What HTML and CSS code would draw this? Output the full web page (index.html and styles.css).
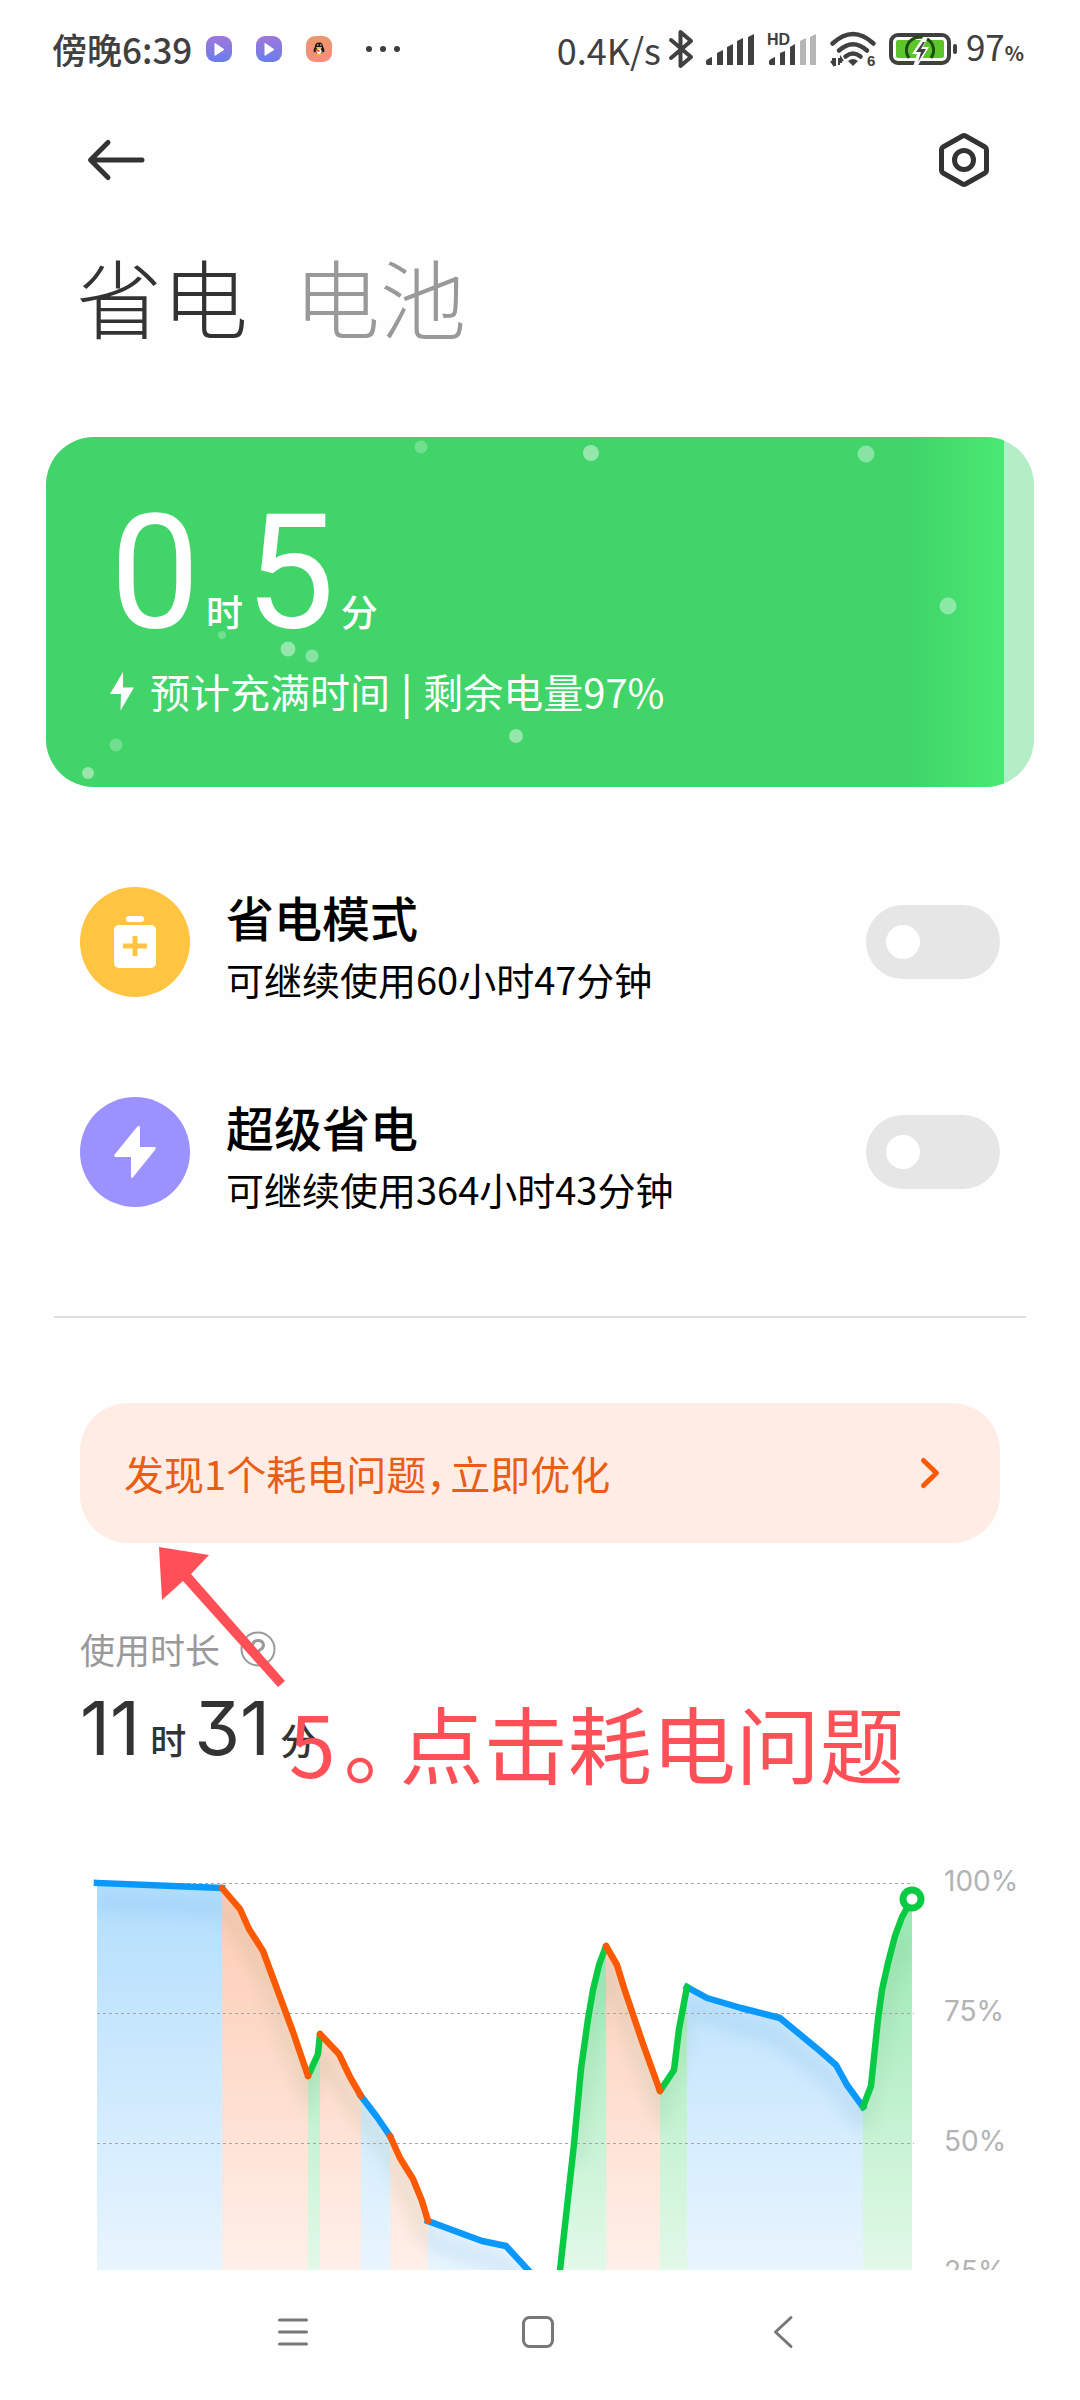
FILE: index.html
```html
<!DOCTYPE html>
<html lang="zh-CN">
<head>
<meta charset="utf-8">
<meta name="viewport" content="width=device-width">
<title>省电与电池</title>
<link rel="stylesheet" href="styles.css">
</head>
<body>
<div class="screen">
  <header class="status">
    <span class="status-time">傍晚6:39</span>
    <div class="status-apps">
      <svg width="26" height="26" viewBox="0 0 26 26" aria-hidden="true">
        <defs><linearGradient id="video" x1="0" y1="0" x2="0" y2="1"><stop offset="0" stop-color="#a077dc"/><stop offset="1" stop-color="#687ee8"/></linearGradient></defs>
        <rect width="26" height="26" rx="9" fill="url(#video)"/><path d="M8.500 7.500v11.500q0 1 1 .5l8-5.300q1-.8 0-1.500l-8-5.500q-1-.5-1 .3z" fill="#fff"/>
      </svg>
      <svg width="26" height="26" viewBox="0 0 26 26" aria-hidden="true">
        <rect width="26" height="26" rx="9" fill="url(#video)"/><path d="M8.500 7.500v11.500q0 1 1 .5l8-5.300q1-.8 0-1.500l-8-5.500q-1-.5-1 .3z" fill="#fff"/>
      </svg>
      <svg width="26" height="26" viewBox="0 0 26 26" aria-hidden="true">
        <defs><linearGradient id="penguin" x1="0" y1="0" x2="0" y2="1"><stop offset="0" stop-color="#e9996b"/><stop offset="1" stop-color="#fb8b80"/></linearGradient></defs>
        <rect width="26" height="26" rx="9" fill="url(#penguin)"/>
        <path d="M13 6.500c-3 0-4 2-4 4-1 2-2 4-1 6l1.500-1c.5 2 2 3.500 3.500 3.500s3-1.500 3.500-3.500l1.500 1c1-2 0-4-1-6 0-2-1-4-4-4z" fill="#201510"/>
        <ellipse cx="13" cy="15.500" rx="2.600" ry="2.800" fill="#fff"/><path d="M10 11h6l-1 2h-4z" fill="#e6c34a"/><path d="M9.500 13l4 1v2l-4-1z" fill="#ef4a2b"/><path d="M10 18.500h6" stroke="#f3b52e" stroke-width="1.500"/><path d="M11 9h1.500M14 9h1.500" stroke="#fff" stroke-width="1"/>
      </svg>
    </div>
    <svg class="status-more" width="34" height="6" viewBox="0 0 34 6" fill="#3c3c3c" aria-hidden="true"><circle cx="3" cy="3" r="3"/><circle cx="17" cy="3" r="3"/><circle cx="31" cy="3" r="3"/></svg>
    <span class="status-speed">0.4K/s</span>
    <div class="status-icons">
      <svg width="24" height="40" viewBox="0 0 24 40" fill="none" stroke="#404040" stroke-width="4" stroke-linecap="round" stroke-linejoin="round" aria-hidden="true"><path d="M2 11l20 17-10.500 9V3L22 12 2 29"/></svg>
      <svg width="48" height="32" viewBox="0 0 48 32" fill="#404040" aria-hidden="true"><path d="M0 31v-3q1-2 6-4v8H1zM11 32V20l6-3v15zM21 32V14l6-3v21zM31 32V8l6-3v27zM42 32V4l6-3v30q0 1-1 1z"/></svg>
      <svg width="50" height="34" viewBox="0 0 50 34" fill="#404040" aria-hidden="true"><text class="tiny" x="0" y="13" font-size="16">HD</text><path d="M2 32v-3q1-2 6-4v8H3zM13 33V21l5-2v14zM23 33V15l5-3v21z"/><path d="M33 33V9l6-3v27zM43 33V5l6-3v31z" fill="#b5b5b5"/></svg>
      <svg width="46" height="38" viewBox="0 0 46 38" aria-hidden="true"><g fill="none" stroke="#404040" stroke-width="4.500" stroke-linecap="round"><path d="M2.500 13.500q20.500-19 41 0M9 20.500q14-12.500 28 0M15.500 26.500q7.500-6 15 0"/></g><path d="M18 31q5-4 10 0l-5 5z" fill="#404040"/><path d="M3 28v6l-2-3M5 28v8M9 28v7M11 33v-5l2 3" fill="none" stroke="#404040" stroke-width="2"/><text class="tiny" x="37" y="36" font-size="15" fill="#404040">6</text></svg>
      <svg width="68" height="36" viewBox="0 0 68 36" aria-hidden="true"><rect x="2" y="4" width="58" height="28" rx="7" fill="#fff" stroke="#404040" stroke-width="4"/><rect x="7" y="9" width="48" height="18" rx="2" fill="#5cc52b"/><path d="M20 27c-5-7-3-20 11-21 14 1 16 14 11 21" fill="none" stroke="#1f4a12" stroke-width="3"/><path d="M34 6l-11 17h5l-4 13h4l12-20h-6l5-10z" fill="#fff"/><path d="M34 11l-7 10h5l-3 10 8-13h-5l4-7z" fill="#404040"/><rect x="64" y="13" width="4" height="10" rx="2" fill="#404040"/></svg>
    </div>
    <span class="status-level">97<small>%</small></span>
  </header>

  <main class="content">
    <div class="appbar">
      <button class="icon-button" aria-label="返回"><svg width="60" height="44" viewBox="0 0 60 44" fill="none" stroke="#333" stroke-width="5" stroke-linecap="round" stroke-linejoin="round"><path d="M56 22H5M22 4.500L4.500 22 22 39.500"/></svg></button>
      <button class="icon-button" aria-label="设置"><svg width="50" height="54" viewBox="0 0 50 54" fill="none" stroke="#333" stroke-width="5" stroke-linejoin="round"><path d="M23.500 3q1.500-.8 3 0l19.500 11q1.500 1 1.500 2.500v21q0 1.500-1.500 2.500l-19.500 11q-1.500.8-3 0L4 40q-1.500-1-1.500-2.500v-21Q2.500 15 4 14z"/><circle cx="25" cy="27" r="9.500"/></svg></button>
    </div>

    <nav class="tabs">
      <button class="tab tab-active">省电</button>
      <button class="tab">电池</button>
    </nav>

    <section class="charge">
      <div class="charge-fill" style="width: 97%"></div>
      <svg class="charge-bubbles" viewBox="0 0 988 350" fill="#fff" aria-hidden="true">
        <g opacity=".45"><circle cx="545" cy="16" r="8"/><circle cx="242" cy="212" r="7.500"/><circle cx="470" cy="299" r="7"/><circle cx="42" cy="336" r="6"/></g>
        <g opacity=".38"><circle cx="266" cy="219" r="6.500"/><circle cx="902" cy="169" r="8.500"/><circle cx="820" cy="17" r="8.500"/></g>
        <g opacity=".25"><circle cx="375" cy="10" r="6.500"/><circle cx="176" cy="198" r="4"/><circle cx="70" cy="308" r="6.500"/></g>
      </svg>
      <p class="charge-time">0<span>时</span>5<span>分</span></p>
      <p class="charge-note"><svg width="24" height="39" viewBox="0 0 24 39" fill="#fff" aria-hidden="true"><path d="M13 0L0 22h11l-.5 16.500L24 15.500H13z"/></svg><span>预计充满时间 <span class="bar">|</span> 剩余电量97%</span></p>
    </section>

    <section class="modes">
      <div class="mode">
        <span class="mode-icon mode-saver"><svg width="42" height="54" viewBox="0 0 42 54" aria-hidden="true"><rect x="12" y="1" width="18" height="6" rx="3" fill="#fff"/><rect y="10" width="42" height="43" rx="5" fill="#fff"/><path d="M21 21v20M9 31h24" stroke="#ffc542" stroke-width="5"/></svg></span>
        <label class="mode-text" for="saver"><span class="mode-title">省电模式</span><span class="mode-sub">可继续使用60小时47分钟</span></label>
        <input class="switch" type="checkbox" role="switch" id="saver">
      </div>
      <div class="mode">
        <span class="mode-icon mode-ultra"><svg width="42" height="54" viewBox="0 0 42 54" fill="#fff" aria-hidden="true"><path d="M23 2q3-3 3 1v19h14q3 0 1 3L20 51q-3 4-3 0V32H2q-3 0-1-3z"/></svg></span>
        <label class="mode-text" for="ultra"><span class="mode-title">超级省电</span><span class="mode-sub">可继续使用364小时43分钟</span></label>
        <input class="switch" type="checkbox" role="switch" id="ultra">
      </div>
    </section>

    <hr class="divider">

    <a class="issue" href="#optimize"><span>发现1个耗电问题<span class="half">，</span>立即优化</span><svg width="20" height="32" viewBox="0 0 20 32" fill="none" stroke="#fa5a05" stroke-width="5" stroke-linecap="round" stroke-linejoin="round" aria-hidden="true"><path d="M3.500 3.500L16.500 16 3.500 28.500"/></svg></a>

    <section class="usage">
      <h2 class="usage-label">使用时长<svg width="36" height="36" viewBox="0 0 36 36" fill="none" stroke="#999" aria-hidden="true"><circle cx="18" cy="18" r="16.500" stroke-width="2"/><path d="M12.500 14.500q.5-5 5.500-5t5.500 4.500q0 3-3 4.500-2.500 1.500-2.500 4" stroke-width="3"/><circle cx="18" cy="26.500" r="1" stroke-width="2"/></svg></h2>
      <p class="usage-time">11<span>时</span>31<span>分</span></p>

      <div class="chart">
        <svg class="chart-plot" viewBox="0 0 840 550" role="img" aria-label="电量曲线">
          <defs>
            <linearGradient id="blue" gradientUnits="userSpaceOnUse" x1="0" y1="15" x2="0" y2="535"><stop offset="0" stop-color="#b2defd"/><stop offset=".75" stop-color="#e9f5fe"/><stop offset="1" stop-color="#fff"/></linearGradient>
            <linearGradient id="orange" gradientUnits="userSpaceOnUse" x1="0" y1="15" x2="0" y2="535"><stop offset="0" stop-color="#fdcab2"/><stop offset=".75" stop-color="#fff0ea"/><stop offset="1" stop-color="#fff"/></linearGradient>
            <linearGradient id="green" gradientUnits="userSpaceOnUse" x1="0" y1="15" x2="0" y2="535"><stop offset="0" stop-color="#94e7ae"/><stop offset=".75" stop-color="#e3f9e9"/><stop offset="1" stop-color="#fff"/></linearGradient>
            <filter id="soft" x="-10%" y="-10%" width="120%" height="130%"><feGaussianBlur stdDeviation="8"/></filter>
            <clipPath id="under"><path d="M7 15L132 20 150 41 159 61 173 83 203 164 218 208 228 186 230 166 249 186 260 209 271 228 287 249 300 268 310 290 323 311 332 333 338 353 392 373 416 378 450 415 458 535 464 480 470 402 484 276 491 201 498 151 503 122 509 97 516 78 527 97 534 120 553 176 570 223 584 202 589 161 597 119 617 130 651 140 690 150 730 183 746 197 757 217 773 239 781 218 788 151 792 122 798 95 805 68 812 49 822 31V535H7z"/></clipPath>
          </defs>
          <g fill="url(#blue)">
            <path d="M7 15L132 20V535H7z"/>
            <path d="M271 228L287 249 300 268V535H271z"/>
            <path d="M338 353L392 373 416 378 450 415V535H338z"/>
            <path d="M597 119L617 130 651 140 690 150 730 183 746 197 757 217 773 239V535H597z"/>
          </g>
          <g fill="url(#orange)">
            <path d="M132 20L150 41 159 61 173 83 203 164 218 208V535H132z"/>
            <path d="M230 166L249 186 260 209 271 228V535H230z"/>
            <path d="M300 268L310 290 323 311 332 333 338 353V535H300z"/>
            <path d="M516 78L527 97 534 120 553 176 570 223V535H516z"/>
          </g>
          <g fill="url(#green)">
            <path d="M218 208L228 186 230 166V535H218z"/>
            <path d="M464 480L470 402 484 276 491 201 498 151 503 122 509 97 516 78V535H464z"/>
            <path d="M570 223L584 202 589 161 597 119V535H570z"/>
            <path d="M773 239L781 218 788 151 792 122 798 95 805 68 812 49 822 31V535H773z"/>
          </g>
          <g clip-path="url(#under)"><g filter="url(#soft)" fill="none" stroke-width="14" opacity=".14">
            <path d="M7 35L132 40" stroke="#3c92e0"/>
            <path d="M132 40L150 61 173 103 218 228 230 186 271 248 300 288 338 373" stroke="#6f9a5a"/>
            <path d="M338 373L416 398 450 435" stroke="#3c92c8"/>
            <path d="M484 296L498 171 516 98 570 243 589 181 597 139" stroke="#5fa070"/>
            <path d="M597 139L690 170 746 217 773 259" stroke="#3c92c8"/>
            <path d="M773 259L798 115 815 70" stroke="#5fa070"/>
          </g></g>
          <path d="M7 15.500H824M7 145.500H824M7 275.500H824M7 405.500H824" stroke="#a6a6a6" stroke-dasharray="3 3"/>
          <g fill="none" stroke-width="6.500" stroke-linejoin="round" stroke-linecap="round">
            <path d="M7 15L132 20M271 228L287 249 300 268M338 353L392 373 416 378 450 415M597 119L617 130 651 140 690 150 730 183 746 197 757 217 773 239" stroke="#0a98fb" stroke-linecap="square"/>
            <path d="M218 208L228 186 230 166M464 480L470 402 484 276 491 201 498 151 503 122 509 97 516 78M570 223L584 202 589 161 597 119M773 239L781 218 788 151 792 122 798 95 805 68 812 49 822 31" stroke="#08cb43"/>
            <path d="M132 20L150 41 159 61 173 83 203 164 218 208M230 166L249 186 260 209 271 228M300 268L310 290 323 311 332 333 338 353M516 78L527 97 534 120 553 176 570 223" stroke="#fb5a03"/>
          </g>
          <circle cx="822" cy="31" r="9" fill="#fff" stroke="#08cb43" stroke-width="7"/>
        </svg>
        <div class="chart-scale"><span>100%</span><span>75%</span><span>50%</span><span>25%</span><span>0%</span></div>
      </div>

      <svg class="note-arrow" width="140" height="148" viewBox="0 0 140 148" fill="#ff5058" aria-hidden="true"><path d="M3 2L53 10 35 29 129 136 122 142 27 36 6 55z"/></svg>
      <p class="note-text">5<span class="half">。</span>点击耗电问题</p>
    </section>
  </main>

  <footer class="navbar">
    <button class="nav-button" aria-label="最近任务"><svg width="32" height="32" viewBox="0 0 32 32" fill="none" stroke="#777" stroke-width="3" stroke-linecap="round"><path d="M2.500 4h27M2.500 16h27M2.500 28h27"/></svg></button>
    <button class="nav-button" aria-label="主屏幕"><svg width="32" height="32" viewBox="0 0 32 32" fill="none" stroke="#777" stroke-width="3"><rect x="1.500" y="1.500" width="29" height="29" rx="6"/></svg></button>
    <button class="nav-button" aria-label="返回上一页"><svg width="32" height="32" viewBox="0 0 32 32" fill="none" stroke="#777" stroke-width="3" stroke-linecap="round" stroke-linejoin="round"><path d="M24 1.500L8.500 16 24 30.500"/></svg></button>
  </footer>
</div>
</body>
</html>
```
FILE: styles.css
```css
* { box-sizing: border-box; }

body {
  margin: 0;
  background: #fefefe;
  color: #333;
  font-family: "Noto Sans CJK SC", sans-serif;
}

p, h2 { margin: 0; font-weight: 400; }
svg { display: block; flex: none; overflow: visible; }
button { padding: 0; border: 0; background: none; color: inherit; font: inherit; }

.screen {
  display: flex;
  flex-direction: column;
  height: 100vh;
}

/* Status bar */
.status {
  display: flex;
  flex: none;
  align-items: center;
  height: 98px;
  padding: 0 56px 0 52px;
  color: #404040;
  font-size: 35px;
  line-height: 48px;
  white-space: nowrap;
}
.status-time { font-weight: 500; }
.status-apps { display: flex; gap: 24px; margin-left: 14px; }
.status-more { margin-left: 34px; }
.status-speed { margin-left: auto; font-size: 36px; }
.status-icons { display: flex; align-items: center; gap: 13px; margin-left: 8px; }
.status-level { margin-left: 9px; }
.status-level small { font-size: 20px; font-weight: 700; }
.tiny { font-family: "Liberation Sans", sans-serif; font-weight: 700; }

/* Scrolling page */
.content {
  flex: 1;
  min-height: 0;
  overflow: hidden;
}
.appbar {
  display: flex;
  align-items: center;
  justify-content: space-between;
  height: 124px;
  padding: 0 91px 0 86px;
}
.tabs {
  display: flex;
  gap: 46px;
  padding: 24px 76px 0;
}
.tab {
  color: #999;
  font-size: 86px;
  font-weight: 300;
  line-height: 100px;
}
.tab-active { color: #333; }

/* Charging card */
.charge {
  position: relative;
  margin: 91px 46px 0;
  padding: 56px 64px 66px;
  overflow: hidden;
  border-radius: 48px;
  background: #b3eec6;
  color: #fff;
}
.charge-fill {
  position: absolute;
  inset: 0 auto 0 0;
  background: linear-gradient(to right, #40d469 90%, #4ae873);
}
.charge-bubbles { position: absolute; inset: 0; width: 100%; height: 100%; }
.charge-time {
  display: flex;
  position: relative;
  align-items: baseline;
  font-family: Roboto, sans-serif;
  font-size: 160px;
  line-height: 160px;
}
.charge-time span {
  margin: 0 2px 0 6px;
  font-family: "Noto Sans CJK SC", sans-serif;
  font-size: 37px;
  font-weight: 500;
  line-height: 38px;
}
.charge-note {
  display: flex;
  position: relative;
  align-items: center;
  gap: 16px;
  margin-top: 8px;
  font-size: 40px;
  line-height: 60px;
}
.bar { margin: 0 2px; font-weight: 500; }

/* Saver modes */
.modes { margin-top: 50px; padding: 0 80px; }
.mode {
  display: flex;
  align-items: center;
  gap: 36px;
  height: 210px;
}
.mode-icon {
  display: grid;
  flex: none;
  place-items: center;
  width: 110px;
  height: 110px;
  border-radius: 50%;
}
.mode-saver { background: #ffc542; }
.mode-ultra { background: #9c92ff; }
.mode-text {
  display: flex;
  flex: 1;
  flex-direction: column;
  padding-top: 10px;
  color: #000;
}
.mode-title { font-size: 48px; font-weight: 500; line-height: 64px; }
.mode-sub { font-size: 38px; line-height: 62px; }
.switch {
  display: flex;
  flex: none;
  align-items: center;
  width: 134px;
  height: 74px;
  margin: 0;
  padding: 0 20px;
  appearance: none;
  border-radius: 37px;
  background: #e6e6e6;
}
.switch::before {
  content: "";
  width: 34px;
  height: 34px;
  border-radius: 50%;
  background: #fff;
}
.switch:checked { justify-content: flex-end; background: #40d469; }

.divider {
  height: 2px;
  margin: 59px 54px 0;
  border: 0;
  background: #e0e0e0;
}

/* Power issue banner */
.issue {
  display: flex;
  align-items: center;
  justify-content: space-between;
  height: 140px;
  margin: 85px 80px 0;
  padding: 0 60px 0 44px;
  border-radius: 48px;
  background: #ffede5;
  color: #e95d14;
  font-size: 40px;
  line-height: 60px;
  text-decoration: none;
}
.half {
  margin-right: 4px;
  font-feature-settings: "halt";
}

/* Usage time and chart */
.usage { position: relative; padding-top: 81px; }
.usage-label {
  display: flex;
  align-items: center;
  gap: 20px;
  padding: 0 80px;
  color: #999;
  font-size: 35px;
  line-height: 50px;
}
.usage-time {
  display: flex;
  align-items: baseline;
  margin-top: 14px;
  padding: 0 80px;
  font-family: Inter, "Noto Sans CJK SC", sans-serif;
  font-feature-settings: "cv09";
  font-size: 74px;
  line-height: 80px;
}
.usage-time span {
  margin: 0 8px 0 10px;
  font-family: "Noto Sans CJK SC", sans-serif;
  font-size: 36px;
  font-weight: 500;
  line-height: 36px;
}
.chart {
  display: flex;
  gap: 14px;
  margin-top: 100px;
  padding: 0 56px 0 90px;
}
.chart-plot { flex: 1; min-width: 0; height: auto; }
.chart-scale {
  display: flex;
  flex: none;
  flex-direction: column;
  justify-content: space-between;
  width: 80px;
  padding-bottom: 4px;
  color: #b3b3b3;
  font-family: Inter, sans-serif;
  font-size: 28px;
  line-height: 26px;
}

/* Annotation laid over the usage section */
.note-arrow { position: absolute; top: 2px; left: 156px; }
.note-text {
  position: absolute;
  top: 149px;
  left: 289px;
  color: #ff5058;
  font-size: 84px;
  line-height: 100px;
  white-space: nowrap;
}
.note-text .half { margin: 0 14px 0 8px; }

/* System navigation */
.navbar {
  display: flex;
  flex: none;
  height: 130px;
  padding: 0 174px 6px 170px;
}
.nav-button { display: grid; flex: 1; place-items: center; }
```
